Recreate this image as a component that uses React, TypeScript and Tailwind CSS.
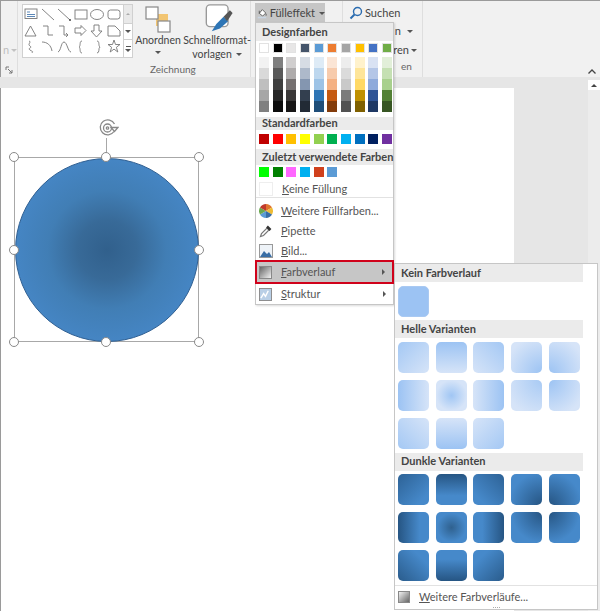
import React from 'react';

const font = 'font-["Lato","Open_Sans",sans-serif]';

const themeTop = [
  'bg-[#ffffff]', 'bg-[#000000]', 'bg-[#e7e6e6]', 'bg-[#44546a]', 'bg-[#5b9bd5]',
  'bg-[#ed7d31]', 'bg-[#a5a5a5]', 'bg-[#ffc000]', 'bg-[#4472c4]', 'bg-[#70ad47]',
];

const themeRamps = [
  ['bg-[#f2f2f2]', 'bg-[#d9d9d9]', 'bg-[#bfbfbf]', 'bg-[#a6a6a6]', 'bg-[#808080]'],
  ['bg-[#7f7f7f]', 'bg-[#595959]', 'bg-[#3f3f3f]', 'bg-[#262626]', 'bg-[#0d0d0d]'],
  ['bg-[#d0cece]', 'bg-[#aeabab]', 'bg-[#757070]', 'bg-[#3a3838]', 'bg-[#181717]'],
  ['bg-[#d6dce4]', 'bg-[#adb9ca]', 'bg-[#8496b0]', 'bg-[#333f4f]', 'bg-[#222a35]'],
  ['bg-[#deebf6]', 'bg-[#bdd7ee]', 'bg-[#9dc3e6]', 'bg-[#2e75b5]', 'bg-[#1f4e79]'],
  ['bg-[#fbe5d5]', 'bg-[#f7cbac]', 'bg-[#f4b183]', 'bg-[#c55a11]', 'bg-[#833c0b]'],
  ['bg-[#ededed]', 'bg-[#dbdbdb]', 'bg-[#c9c9c9]', 'bg-[#7b7b7b]', 'bg-[#525252]'],
  ['bg-[#fff2cc]', 'bg-[#fee599]', 'bg-[#ffd965]', 'bg-[#bf9000]', 'bg-[#7f6000]'],
  ['bg-[#d9e2f3]', 'bg-[#b4c6e7]', 'bg-[#8eaadb]', 'bg-[#2f5496]', 'bg-[#1f3864]'],
  ['bg-[#e2efd9]', 'bg-[#c5e0b3]', 'bg-[#a8d08d]', 'bg-[#538135]', 'bg-[#375623]'],
];

const standard = [
  'bg-[#c00000]', 'bg-[#ff0000]', 'bg-[#ffc000]', 'bg-[#ffff00]', 'bg-[#92d050]',
  'bg-[#00b050]', 'bg-[#00b0f0]', 'bg-[#0070c0]', 'bg-[#002060]', 'bg-[#7030a0]',
];

const recent = ['bg-[#00ff00]', 'bg-[#008000]', 'bg-[#ff66ff]', 'bg-[#00b0f0]', 'bg-[#d0401c]', 'bg-[#5b9bd5]'];

const lightVariants = [
  'bg-[linear-gradient(135deg,#a4c8f4,#d6e4f8)]',
  'bg-[linear-gradient(180deg,#9cc3f3,#d6e4f8)]',
  'bg-[linear-gradient(225deg,#a4c8f4,#d6e4f8)]',
  'bg-[radial-gradient(circle_at_100%_100%,#9cc3f3,#d6e4f8_85%)]',
  'bg-[radial-gradient(circle_at_0%_100%,#9cc3f3,#d6e4f8_85%)]',
  'bg-[linear-gradient(90deg,#9cc3f3,#d6e4f8)]',
  'bg-[radial-gradient(circle,#a0c6f4,#d6e4f8_70%)]',
  'bg-[linear-gradient(270deg,#9cc3f3,#d6e4f8)]',
  'bg-[radial-gradient(circle_at_100%_0%,#a8caf4,#d6e4f8_85%)]',
  'bg-[radial-gradient(circle_at_0%_0%,#9cc3f3,#d6e4f8_85%)]',
  'bg-[linear-gradient(45deg,#a4c8f4,#d6e4f8)]',
  'bg-[linear-gradient(0deg,#9cc3f3,#d6e4f8)]',
  'bg-[linear-gradient(315deg,#a4c8f4,#d6e4f8)]',
];

const darkVariants = [
  'bg-[linear-gradient(135deg,#2d6296,#4689ca_80%)]',
  'bg-[linear-gradient(180deg,#265583,#4689ca_70%)]',
  'bg-[linear-gradient(225deg,#2d6296,#4689ca_80%)]',
  'bg-[radial-gradient(circle_at_100%_100%,#265583,#4689ca_75%)]',
  'bg-[radial-gradient(circle_at_0%_100%,#265583,#4689ca_75%)]',
  'bg-[linear-gradient(90deg,#265583,#4689ca_70%)]',
  'bg-[radial-gradient(circle,#2f618f,#4689ca_65%)]',
  'bg-[linear-gradient(270deg,#265583,#4689ca_70%)]',
  'bg-[radial-gradient(circle_at_100%_0%,#265583,#4689ca_70%)]',
  'bg-[radial-gradient(circle_at_0%_0%,#265583,#4689ca_70%)]',
  'bg-[linear-gradient(45deg,#2a5c8c,#4689ca_75%)]',
  'bg-[linear-gradient(0deg,#265583,#4689ca_70%)]',
  'bg-[linear-gradient(315deg,#2a5c8c,#4689ca_75%)]',
];

const handles = [
  'left-[8px] top-[64px]', 'left-[100px] top-[64px]', 'left-[193px] top-[64px]',
  'left-[8px] top-[157px]', 'left-[193px] top-[157px]',
  'left-[8px] top-[249px]', 'left-[100px] top-[249px]', 'left-[193px] top-[249px]',
];

function Caret({ className = '' }: { className?: string }) {
  return <span className={`inline-block h-0 w-0 border-x-[3px] border-t-[3px] border-x-transparent border-t-[#555] ${className}`} />;
}

function ShapeGallery() {
  return (
    <svg viewBox="0 0 100 52" className="h-[52px] w-[100px]" fill="none" stroke="#777" strokeWidth="0.9">
      <rect x="2" y="4" width="12" height="9.5" />
      <path d="M4 7h3M4 9.5h8M4 11.500h8" stroke="#4a7ab0" />
      <path d="M19 4l12 11" />
      <path d="M35 4l12 11" />
      <circle cx="47" cy="15" r="1" fill="#444" stroke="none" />
      <rect x="52" y="5" width="12" height="9" />
      <ellipse cx="74" cy="9.5" rx="6.5" ry="5" />
      <rect x="85" y="5" width="12" height="9" rx="2.5" />
      <g transform="translate(0 -1)">
        <path d="M2 32l5.500-10 5.500 10z" />
        <path d="M20 22h5v9h5" />
        <path d="M36 22h5v9h4m-2-2l2 2-2 2" />
        <path d="M52 24h6v-2.500l5 5-5 5V29h-6z" />
        <path d="M71 21h5v6h3l-5.500 6-5.500-6h3z" />
        <path d="M85 22h7l5 5v5H85z" />
      </g>
      <g transform="translate(0 -2)">
        <path d="M6 38c3 1-2 3 1 5s-3 2 0 4 3 1 2 3" />
        <path d="M19 39c5 0 9 3 10 9" />
        <path d="M35 49c3-1 3-10 6-10s4 10 7 10" />
        <path d="M59 38c-3 0-1 5-3 6 2 1 0 6 3 6" />
        <path d="M74 38c3 0 1 5 3 6-2 1 0 6-3 6" />
        <path d="M91 37l1.500 4.500h4.500l-3.600 2.800 1.400 4.700-3.800-2.900-3.800 2.900 1.400-4.700-3.600-2.800h4.500z" />
      </g>
    </svg>
  );
}

function Ribbon() {
  return (
    <div className="flex h-[77px] shrink-0 border-t border-l border-t-[#9a9a9a] border-l-[#9a9a9a] bg-[#f1f1f1] text-[#444]">
      <div className="flex w-[17px] shrink-0 flex-col items-end justify-between border-r border-[#dedede] pb-[3px] pr-1 pt-[44px]">
        <span className="flex w-full items-center gap-0.5 pl-0.5 text-[10px] leading-none text-[#bbb]">
          n <Caret className="opacity-30" />
        </span>
        <svg viewBox="0 0 8 8" className="h-2 w-2" fill="none" stroke="#777">
          <path d="M1 4V1h3M7 7L3 3M7 4v3H4" />
        </svg>
      </div>

      <div className="flex w-[233px] shrink-0 flex-col border-r border-[#dedede] pl-[4px]">
        <div className="flex h-[62px] items-start pt-[3px]">
          <div className="flex h-[54px] w-[111px] shrink-0 border border-[#d0d0d0] bg-white">
            <ShapeGallery />
            <div className="flex flex-1 flex-col border-l border-[#d0d0d0]">
              <div className="flex h-[18px] items-center justify-center bg-[#e9e9e9]">
                <span className="h-0 w-0 border-x-[2px] border-b-[2px] border-x-transparent border-b-[#aaa]" />
              </div>
              <div className="flex h-[17px] items-center justify-center border-y border-[#d0d0d0]">
                <Caret className="border-x-[2px]" />
              </div>
              <div className="flex flex-1 flex-col items-center justify-center gap-[2px]">
                <span className="h-px w-[5px] bg-[#555]" />
                <Caret className="border-x-[2px]" />
              </div>
            </div>
          </div>
          <div className="flex w-[50px] shrink-0 flex-col items-center">
            <svg viewBox="0 0 28 28" className="h-[30px] w-[28px]">
              <rect x="12" y="9" width="12" height="12" fill="#f2c572" />
              <rect x="2" y="2" width="12" height="12" fill="#fff" stroke="#888" strokeWidth="1.200" />
              <rect x="14" y="16" width="12" height="11" fill="#fff" stroke="#888" strokeWidth="1.200" />
            </svg>
            <span className={`${font} text-[10.500px] leading-[13px]`}>Anordnen</span>
            <Caret className="mt-[4px]" />
          </div>
          <div className="ml-[1px] flex w-[66px] shrink-0 flex-col items-center">
            <svg viewBox="0 0 32 32" className="ml-[4px] h-[29px] w-[30px]">
              <rect x="2" y="1" width="24" height="24" rx="4" fill="#fff" stroke="#999" strokeWidth="1.500" />
              <path d="M8 30l5-8 8-8 5 5-9 8z" fill="#2e75b5" />
              <path d="M21 14l7-7 3 3-6 9z" fill="#555" />
            </svg>
            <span className={`${font} mt-px whitespace-nowrap text-[10.500px] leading-[13px]`}>Schnellformat-</span>
            <span className={`${font} flex items-center gap-1 text-[10.500px] leading-[14px]`}>
              vorlagen <Caret />
            </span>
          </div>
        </div>
        <div className={`${font} pl-[128px] text-[10px] leading-[13px] text-[#666]`}>Zeichnung</div>
      </div>

      <div className="flex w-[92px] shrink-0 flex-col border-r border-[#dedede] pl-[4px] pt-[2px]">
        <div className={`${font} flex h-[20px] w-[70px] items-center gap-[2px] bg-[#c6c6c6] pl-[2px] text-[11px]`}>
          <svg viewBox="0 0 14 14" className="h-[14px] w-[14px]" fill="none" stroke="#444">
            <path d="M3 7.500l4-5 4.500 4.500-4 4z" fill="#fff" />
            <path d="M3 7.500V4M12 8v2.500" />
            <path d="M1 13h11" stroke="#c9d6e4" strokeWidth="2" />
          </svg>
          Fülleffekt <Caret className="ml-[2px]" />
        </div>
      </div>

      <div className="flex w-[80px] shrink-0 flex-col border-r border-[#dedede] pl-[6px] pt-[3px]">
        <div className={`${font} flex items-center gap-[2px] text-[11px] leading-[18px]`}>
          <svg viewBox="0 0 14 14" className="h-[14px] w-[14px]" fill="none" stroke="#2b6cb0" strokeWidth="1.400">
            <circle cx="8.500" cy="5.500" r="4" />
            <path d="M5.500 8.500L1.500 12.500" strokeWidth="2" />
          </svg>
          Suchen
        </div>
        <div className={`${font} flex h-[19px] items-center justify-end gap-[6px] pr-[9px] text-[11px]`}>
          n <Caret />
        </div>
        <div className={`${font} flex h-[19px] items-center justify-end gap-[2px] pr-[5px] text-[11px]`}>
          ren <Caret />
        </div>
        <div className={`${font} pl-[52px] text-[10px] leading-[13px] text-[#666]`}>en</div>
      </div>

      <div className="flex flex-1 items-end justify-end pb-[3px] pr-[4px]">
        <svg viewBox="0 0 8 5" className="h-[5px] w-[8px]" fill="none" stroke="#444" strokeWidth="1.300">
          <path d="M0.500 4.500L4 1l3.500 3.500" />
        </svg>
      </div>
    </div>
  );
}

function SelectedCircle() {
  return (
    <>
      <svg viewBox="0 0 20 20" className="absolute left-[96px] top-[30px] h-[20px] w-[22px]" fill="none" stroke="#888" strokeWidth="1.300">
        <path d="M16 13.500A7.500 7.500 0 1 1 16.500 6" />
        <circle cx="9.500" cy="10" r="4" />
        <circle cx="9.500" cy="10" r="1.200" />
        <path d="M13 9.500h7l-3.500 4z" fill="#fff" />
      </svg>
      <div className="absolute left-[105px] top-[50px] h-[19px] w-px bg-[#a8a8a8]" />
      <div className="absolute left-[13px] top-[69px] h-[185px] w-[185px] border border-[#a8a8a8]" />
      <div className="absolute left-[14px] top-[70px] h-[184px] w-[184px] rounded-full border border-[#2f5f92] bg-[radial-gradient(circle,#31608c_0%,#386a98_23%,#417eb5_46%,#4585c3_70%)]" />
      {handles.map((pos) => (
        <div key={pos} className={`absolute ${pos} h-[10px] w-[10px] rounded-full border border-[#8a8a8a] bg-white`} />
      ))}
    </>
  );
}

function MenuHeader({ children, className = '' }: { children: React.ReactNode; className?: string }) {
  return (
    <div className={`${font} flex items-center whitespace-nowrap bg-[#ebebeb] pl-[6px] text-[11px] font-bold text-[#444] ${className}`}>
      {children}
    </div>
  );
}

function MenuItem({ icon, hot, rest, arrow, active }: { icon: React.ReactNode; hot: string; rest: string; arrow?: boolean; active?: boolean }) {
  return (
    <div
      className={`${font} flex items-center text-[11px] text-[#555] ${
        active ? '-mx-px -mt-px h-[24px] border-2 border-[#d0021b] bg-[#c6c6c6] pl-[2px]' : 'h-[20px] pl-[3px]'
      }`}
    >
      <span className="flex w-[22px] shrink-0 items-center">{icon}</span>
      <span>
        <span className="underline">{hot}</span>
        {rest}
      </span>
      {arrow && <span className="ml-auto mr-[7px] h-0 w-0 border-y-[3px] border-l-[3px] border-y-transparent border-l-[#555]" />}
    </div>
  );
}

function FillMenu() {
  return (
    <div className="absolute left-[255px] top-[22px] z-10 flex h-[283px] w-[139px] flex-col border border-[#c6c6c6] bg-white shadow-[1px_1px_2px_rgba(0,0,0,0.15)]">
      <MenuHeader className="h-[18px]">Designfarben</MenuHeader>
      <div className="mt-[2px] flex gap-[3.670px] pl-[3px]">
        {themeTop.map((c) => (
          <div key={c} className={`h-[10px] w-[10px] border border-[#e2e2e2] ${c}`} />
        ))}
      </div>
      <div className="mt-[4px] flex gap-[3.670px] pl-[3px]">
        {themeRamps.map((ramp) => (
          <div key={ramp[0]} className="flex w-[10px] flex-col">
            {ramp.map((c) => (
              <div key={c} className={`h-[11px] ${c}`} />
            ))}
          </div>
        ))}
      </div>
      <MenuHeader className="mt-[5px] h-[13px]">Standardfarben</MenuHeader>
      <div className="mt-[4px] flex gap-[3.670px] pl-[3px]">
        {standard.map((c) => (
          <div key={c} className={`h-[10px] w-[10px] ${c}`} />
        ))}
      </div>
      <MenuHeader className="mt-[5px] h-[16px]">Zuletzt verwendete Farben</MenuHeader>
      <div className="mt-[2px] flex gap-[3.670px] pl-[3px]">
        {recent.map((c) => (
          <div key={c} className={`h-[10px] w-[10px] ${c}`} />
        ))}
      </div>
      <div className={`${font} mt-[4px] flex h-[17px] items-center gap-[9px] border-b border-[#e2e2e2] pl-[3px] text-[11px] text-[#555]`}>
        <span className="h-[14px] w-[14px] border border-[#eeeeee]" />
        <span>
          <span className="underline">K</span>eine Füllung
        </span>
      </div>
      <div className="mt-[3px] flex flex-col">
        <MenuItem
          hot="W"
          rest="eitere Füllfarben..."
          icon={
            <svg viewBox="0 0 14 14" className="h-[14px] w-[14px]">
              <path d="M7 7L7 0a7 7 0 0 1 6 3.500z" fill="#e0752f" />
              <path d="M7 7l6-3.500A7 7 0 0 1 13 10.500z" fill="#eebb33" />
              <path d="M7 7l6 3.500A7 7 0 0 1 7 14z" fill="#3a6ea5" />
              <path d="M7 7v7a7 7 0 0 1-6-3.500z" fill="#5b9bd5" />
              <path d="M7 7L1 10.500A7 7 0 0 1 1 3.500z" fill="#6aa84f" />
              <path d="M7 7L1 3.500A7 7 0 0 1 7 0z" fill="#c0392b" />
            </svg>
          }
        />
        <MenuItem
          hot="P"
          rest="ipette"
          icon={
            <svg viewBox="0 0 14 14" className="h-[14px] w-[14px]" fill="none" stroke="#777" strokeWidth="1.200">
              <path d="M1.500 12.500l1-3L8 4l2 2-5.500 5.500z" />
              <path d="M8 2.500l3.500 3.500" stroke="#333" strokeWidth="2.500" />
            </svg>
          }
        />
        <MenuItem
          hot="B"
          rest="ild..."
          icon={
            <svg viewBox="0 0 14 14" className="h-[14px] w-[14px]">
              <rect x="0.500" y="0.500" width="13" height="13" fill="#eef3f8" stroke="#999" />
              <path d="M1 13l4-6 3 3 2-2 3 5z" fill="#3a6ea5" />
            </svg>
          }
        />
        <MenuItem
          active
          arrow
          hot="F"
          rest="arbverlauf"
          icon={<span className="h-[13px] w-[13px] border border-[#888] bg-[linear-gradient(135deg,#666,#f2f2f2)]" />}
        />
        <MenuItem
          arrow
          hot="S"
          rest="truktur"
          icon={
            <svg viewBox="0 0 14 14" className="h-[13px] w-[13px]">
              <rect x="0.500" y="0.500" width="13" height="13" fill="#b9cfe6" stroke="#888" />
              <path d="M2 11l3-5 2 3 3-6" stroke="#fff" strokeWidth="1.500" fill="none" />
            </svg>
          }
        />
      </div>
    </div>
  );
}

function VariantGrid({ items }: { items: string[] }) {
  return (
    <div className="grid grid-cols-[repeat(5,31px)] gap-x-[6.700px] gap-y-[7px] pl-[3px] pt-[3.500px]">
      {items.map((c) => (
        <div key={c} className={`h-[31px] w-[31px] rounded-[5px] ${c}`} />
      ))}
    </div>
  );
}

function GradientMenu() {
  return (
    <div className="absolute left-[394px] top-[263px] z-10 flex h-[347px] w-[204px] flex-col border border-[#c6c6c6] bg-white">
      <MenuHeader className="h-[18px] w-[188px]">Kein Farbverlauf</MenuHeader>
      <div className="pl-[3px] pt-[4px]">
        <div className="h-[31px] w-[31px] rounded-[5px] border border-[#a9c9f2] bg-[#9cc3f3]" />
      </div>
      <MenuHeader className="mt-[3px] h-[18px] w-[188px]">Helle Varianten</MenuHeader>
      <VariantGrid items={lightVariants} />
      <MenuHeader className="mt-[4px] h-[18px] w-[188px]">Dunkle Varianten</MenuHeader>
      <VariantGrid items={darkVariants} />
      <div className={`${font} mt-[4px] flex h-[21px] items-center border-t border-[#e2e2e2] pl-[3px] pt-[2px] text-[11px] text-[#555]`}>
        <span className="mr-[9px] h-[12px] w-[12px] border border-[#888] bg-[linear-gradient(135deg,#f2f2f2,#666)]" />
        <span>
          <span className="underline">W</span>eitere Farbverläufe...
        </span>
      </div>
      <div className="mt-auto mb-[1px] flex justify-center gap-[1px]">
        {[0, 1, 2, 3].map((i) => (
          <span key={i} className="h-px w-px bg-[#aaa]" />
        ))}
      </div>
    </div>
  );
}

export default function App() {
  return (
    <div className="relative flex h-[611px] w-[600px] flex-col overflow-hidden bg-white">
      <Ribbon />
      <div className="flex h-[11px] shrink-0 justify-end bg-[#e6e6e6]">
        <div className="relative mt-[3px] flex h-[10px] w-[12px] items-center justify-center bg-white">
          <span className="h-0 w-0 border-x-[3px] border-b-[3px] border-x-transparent border-b-[#444]" />
        </div>
      </div>
      <div className="flex min-h-0 flex-1 border-l border-[#9a9a9a]">
        <div className="relative w-[513px] bg-white">
          <SelectedCircle />
        </div>
        <div className="flex flex-1 justify-end bg-[#e6e6e6]">
          <div className="w-[12px] bg-[#ececec]" />
        </div>
      </div>
      <FillMenu />
      <GradientMenu />
    </div>
  );
}
